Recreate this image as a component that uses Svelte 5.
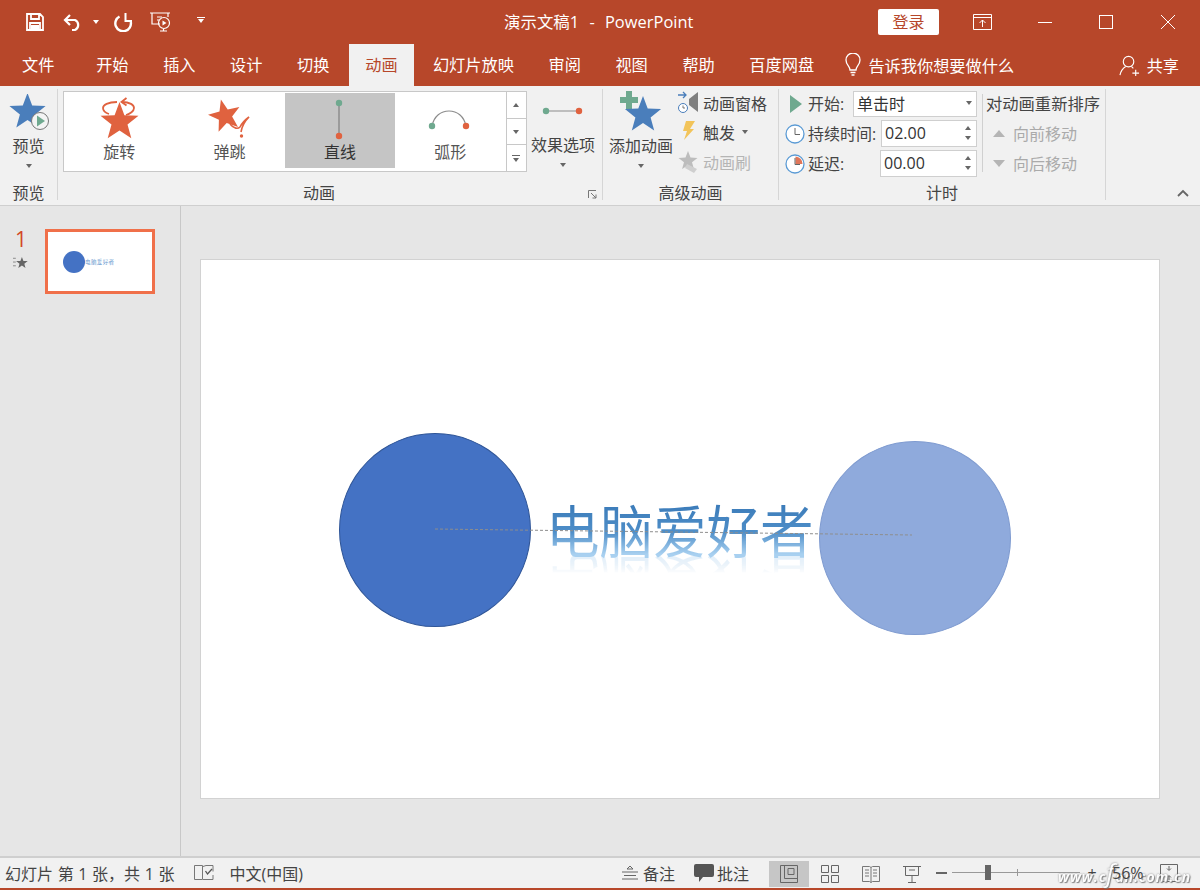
<script>
  function star(cx, cy, R, rot = 0, ratio = 0.42) {
    const pts = [];
    for (let i = 0; i < 10; i++) {
      const rad = i % 2 ? R * ratio : R;
      const a = ((-90 + rot + i * 36) * Math.PI) / 180;
      pts.push(`${(cx + rad * Math.cos(a)).toFixed(1)},${(cy + rad * Math.sin(a)).toFixed(1)}`);
    }
    return pts.join(' ');
  }
  const tabs = ['开始', '插入', '设计', '切换', '动画', '幻灯片放映', '审阅', '视图', '帮助', '百度网盘'];
</script>

<div class="app">
  <header class="titlebar">
    <div class="qat">
      <svg class="i-save" viewBox="0 0 18 18" width="18" height="18"><path d="M1 1h13l3 3v13H1z M5 1v5h8V1 M4 17v-7h10v7" fill="none" stroke="#fff" stroke-width="1.8"/><rect x="5" y="12" width="8" height="5" fill="#fff"/></svg>
      <svg class="i-undo" viewBox="0 0 20 18" width="20" height="18"><path d="M7 2 2 7l5 5M2 7h10a5.500 5.500 0 0 1 0 10H9" fill="none" stroke="#fff" stroke-width="2.200"/></svg>
      <span class="caret-w c1"></span>
      <svg class="i-redo" viewBox="0 0 20 20" width="20" height="20"><path d="M6.500 4.500A7.800 7.800 0 1 0 17.800 10" fill="none" stroke="#fff" stroke-width="2.400"/><path d="M12.500 1V9H19" fill="none" stroke="#fff" stroke-width="2"/></svg>
      <svg class="i-pres" viewBox="0 0 22 22" width="22" height="22"><path d="M1 2h20M3 2v11h8M19 2v4M8 6h5M8 9h2M11 20h7M14.500 18v2" fill="none" stroke="#fff" stroke-width="1.200"/><circle cx="15" cy="12" r="5.500" fill="none" stroke="#fff" stroke-width="1.200"/><path d="M13.500 9.500v5l4-2.500z" fill="#fff"/></svg>
      <span class="custom"><i></i><span class="caret-w"></span></span>
    </div>
    <div class="doc">演示文稿1&nbsp; - &nbsp;PowerPoint</div>
    <div class="wincontrols">
      <button class="login">登录</button>
      <svg class="w-rib" viewBox="0 0 19 16" width="19" height="16"><path d="M.5 3.500h18M.5.500h18v15H.5zM9.500 13V6M6.500 9l3-3 3 3" fill="none" stroke="#fff"/></svg>
      <svg class="w-min" viewBox="0 0 14 14" width="14" height="14"><path d="M0 7.500h14" stroke="#fff"/></svg>
      <svg class="w-max" viewBox="0 0 14 14" width="14" height="14"><rect x=".5" y=".5" width="13" height="13" fill="none" stroke="#fff"/></svg>
      <svg class="w-close" viewBox="0 0 14 14" width="14" height="14"><path d="M0 0l14 14M14 0 0 14" stroke="#fff"/></svg>
    </div>
  </header>

  <nav class="tabbar">
    <span class="tab file">文件</span>
    {#each tabs as t}
      <span class="tab" class:active={t === '动画'}>{t}</span>
    {/each}
    <span class="tell">
      <svg viewBox="0 0 16 24" width="16" height="24"><path d="M5 17c0-4-4-5-4-10a7 7 0 0 1 14 0c0 5-4 6-4 10zM5.500 19.500h5M6.500 22h3" fill="none" stroke="#fff" stroke-width="1.300"/></svg>
      告诉我你想要做什么
    </span>
    <span class="share">
      <svg viewBox="0 0 22 22" width="21" height="21"><circle cx="10" cy="7" r="5.500" fill="none" stroke="#fff" stroke-width="1.200"/><path d="M1 21c1-5 3-7 6-9M13 12l2 2M14 19h7M17.500 15.500v7" fill="none" stroke="#fff" stroke-width="1.200"/></svg>
      共享
    </span>
  </nav>

  <section class="ribbon">
    <div class="group g-preview">
      <div class="body big">
        <svg class="bigicon" viewBox="0 0 40 36" width="40" height="36">
          <polygon points={star(18.500, 18, 19)} fill="#4a7ebb"/>
          <circle cx="31" cy="27" r="8.500" fill="#f4f4f4" stroke="#777" stroke-width="1"/>
          <path d="M28 21.500v11l8-5.500z" fill="#6fa98f"/>
        </svg>
        <span class="biglabel">预览</span>
        <span class="caret"></span>
      </div>
      <div class="glabel">预览</div>
    </div>

    <div class="group g-anim">
      <div class="body anim-body">
        <div class="gallery">
          <div class="gitem">
            <svg viewBox="0 0 44 44" width="44" height="44">
              <polygon points={star(22.500, 26, 20)} fill="#e0623f"/>
              <path d="M20 6C11 6 6 9 6 12c0 3 3 5 6 6M25 6c8 0 12 3 12 6 0 3-4 6-8 7" fill="none" stroke="#e0623f" stroke-width="1.800"/>
              <path d="M29.500 2 24.500 6l5 3.500" fill="none" stroke="#e0623f" stroke-width="1.800"/>
            </svg>
            <span>旋转</span>
          </div>
          <div class="gitem">
            <svg viewBox="0 0 44 44" width="44" height="44">
              <polygon points={star(17, 20, 17, -14)} fill="#e0623f"/>
              <path d="M22 28c4 5 8 5 10 3 2-4 5-7 9-10-4 4-7 9-8 15" fill="none" stroke="#e0623f" stroke-width="1.600"/>
              <circle cx="33.500" cy="40" r="1.700" fill="#e0623f"/>
            </svg>
            <span>弹跳</span>
          </div>
          <div class="gitem sel">
            <svg viewBox="0 0 44 44" width="44" height="44">
              <path d="M21 7v33" stroke="#8c8c8c" stroke-width="1.500"/>
              <circle cx="21" cy="7" r="3.200" fill="#6fa98f"/>
              <circle cx="21" cy="40" r="3.200" fill="#e0623f"/>
            </svg>
            <span>直线</span>
          </div>
          <div class="gitem">
            <svg viewBox="0 0 44 44" width="44" height="44">
              <path d="M4 30C6 20 13 15 21 15s15 5 17 15" fill="none" stroke="#8c8c8c" stroke-width="1.200"/>
              <circle cx="4" cy="30" r="3.200" fill="#6fa98f"/>
              <circle cx="38" cy="30" r="3.200" fill="#e0623f"/>
            </svg>
            <span>弧形</span>
          </div>
          <div class="gscroll">
            <span><b class="up"></b></span>
            <span><b class="down"></b></span>
            <span class="more"><i></i><b class="down"></b></span>
          </div>
        </div>
        <div class="big effect">
          <svg class="effecticon" viewBox="0 0 44 36" width="44" height="36">
            <path d="M5 18h34" stroke="#8c8c8c" stroke-width="1.200"/>
            <circle cx="5" cy="18" r="3.200" fill="#6fa98f"/>
            <circle cx="38" cy="18" r="3.200" fill="#e0623f"/>
          </svg>
          <span class="biglabel">效果选项</span>
          <span class="caret"></span>
        </div>
      </div>
      <div class="glabel anim-label">动画
        <svg class="launcher" viewBox="0 0 9 9" width="9" height="9"><path d="M.5 8V.5H8M3 3l5 5M8 4.500V8H4.500" fill="none" stroke="#777"/></svg>
      </div>
    </div>

    <div class="group g-adv">
      <div class="body adv-body">
        <div class="big add">
          <svg class="addicon" viewBox="0 0 44 40" width="44" height="40">
            <path d="M6 0h6v6h6v6h-6v6H6v-6H0V6h6z" fill="#6fa98f"/>
            <polygon points={star(23, 24, 19)} fill="#4a7ebb"/>
          </svg>
          <span class="biglabel">添加动画</span>
          <span class="caret"></span>
        </div>
        <div class="advlist">
          <div class="row">
            <svg viewBox="0 0 24 26" width="24" height="26">
              <path d="M1 5h8M6 2l3 3-3 3" fill="none" stroke="#4a7ebb" stroke-width="1.300"/>
              <path d="M12 9l9-7v20l-9-7z" fill="#7f7f7f"/>
              <circle cx="6" cy="18" r="4.500" fill="#fff" stroke="#4a7ebb"/>
              <path d="M6 15.500V18h2" fill="none" stroke="#555" stroke-width=".8"/>
            </svg>
            <span>动画窗格</span>
          </div>
          <div class="row">
            <svg viewBox="0 0 24 24" width="24" height="24"><path d="M9 1h9l-5 8h4L7 20l3-9H6z" fill="#f2c45a"/></svg>
            <span>触发</span><span class="caret small"></span>
          </div>
          <div class="row off">
            <svg viewBox="0 0 24 24" width="24" height="24">
              <polygon points={star(11, 11, 10)} fill="#bdbdbd"/>
              <path d="M10 14l10 5-3 4-9-5z" fill="#cfcfcf"/>
            </svg>
            <span>动画刷</span>
          </div>
        </div>
      </div>
      <div class="glabel">高级动画</div>
    </div>

    <div class="group g-time">
      <div class="body time-body">
        <div class="timeform">
          <div class="tr tr-start">
            <svg viewBox="0 0 16 20" width="16" height="20"><path d="M2 1v18l12-9z" fill="#6fa98f"/></svg>
            <label for="start">开始:</label>
            <div id="start" class="field select">单击时<span class="caret small"></span></div>
          </div>
          <div class="tr">
            <svg viewBox="0 0 20 20" width="20" height="20"><circle cx="10" cy="10" r="9" fill="#fff" stroke="#5b9bd5" stroke-width="1.300"/><path d="M10 4v6.500h5" fill="none" stroke="#666"/></svg>
            <label for="dur">持续时间:</label>
            <div id="dur" class="field spin">02.00<span class="arrows"><b class="up"></b><b class="down"></b></span></div>
          </div>
          <div class="tr">
            <svg viewBox="0 0 20 20" width="20" height="20"><circle cx="10" cy="10" r="9" fill="#fff" stroke="#5b9bd5" stroke-width="1.300"/><path d="M10.500 2.500a7.500 7.500 0 0 1 7 7.500h-7z" fill="#e0765a"/><path d="M10 4v6.500h5" fill="none" stroke="#666"/></svg>
            <label for="del">延迟:</label>
            <div id="del" class="field spin wider">00.00<span class="arrows"><b class="up"></b><b class="down"></b></span></div>
          </div>
        </div>
        <div class="reorder">
          <div class="rhead">对动画重新排序</div>
          <div class="rrow"><b class="up large"></b>向前移动</div>
          <div class="rrow"><b class="down large"></b>向后移动</div>
        </div>
      </div>
      <div class="glabel">计时</div>
    </div>

    <div class="collapse">
      <svg viewBox="0 0 12 8" width="12" height="8"><path d="M1 7l5-5 5 5" fill="none" stroke="#666" stroke-width="1.800"/></svg>
    </div>
  </section>

  <main class="workspace">
    <aside class="panel">
      <div class="slidemeta">
        <span class="num">1</span>
        <svg viewBox="0 0 16 13" width="15" height="13">
          <path d="M0 2h3M0 6h3M0 10h3" stroke="#888" stroke-width="1"/>
          <polygon points={star(9.500, 7, 6.500)} fill="#666"/>
        </svg>
      </div>
      <div class="thumb">
        <i class="tcircle"></i><span class="ttext">电脑爱好者</span>
      </div>
    </aside>
    <div class="stage">
      <div class="slide">
        <i class="circle c-a"></i>
        <i class="circle c-b"></i>
        <div class="wordart">电脑爱好者</div>
        <div class="wordart mirror" aria-hidden="true">电脑爱好者</div>
        <svg class="path" viewBox="0 0 960 540" width="960" height="540"><path d="M234 269 711 275" stroke="#8e8e8e" stroke-width="1" stroke-dasharray="3 2" fill="none"/></svg>
      </div>
    </div>
  </main>

  <footer class="status">
    <span class="st-text">幻灯片 第 1 张，共 1 张</span>
    <svg class="st-notes" viewBox="0 0 20 17" width="20" height="17"><path d="M.5 1.500h8v14h-8zM9 2.500l3-1h7v6M9 15.500h10V11" fill="none" stroke="#777"/><path d="M11.500 7l2 3 4.500-5" fill="none" stroke="#555" stroke-width="1.300"/></svg>
    <span class="st-lang">中文(中国)</span>
    <span class="st-right">
      <svg class="s-note" viewBox="0 0 16 14" width="16" height="14"><path d="M8 0 5 3h6zM0 6h16M2 9.500h12M0 13h16" fill="none" stroke="#666"/></svg>
      <span class="s-notes-t">备注</span>
      <svg class="s-com" viewBox="0 0 20 18" width="20" height="18"><path d="M2 0h16a2 2 0 0 1 2 2v9a2 2 0 0 1-2 2H9l-4 5v-5H2a2 2 0 0 1-2-2V2a2 2 0 0 1 2-2z" fill="#555"/></svg>
      <span class="s-com-t">批注</span>
      <span class="viewbtn on"><svg viewBox="0 0 18 18" width="18" height="18"><path d="M.5.500h17v17H.5zM4.500.5v13h13M8 3.500h6v6H8z" fill="none" stroke="#666"/></svg></span>
      <span class="viewbtn"><svg viewBox="0 0 18 18" width="18" height="18"><path d="M.5.500h7v7h-7zM10.500.5h7v7h-7zM.5 10.500h7v7h-7zM10.500 10.500h7v7h-7z" fill="none" stroke="#666"/></svg></span>
      <span class="viewbtn"><svg viewBox="0 0 18 18" width="18" height="18"><path d="M.5 1.500h7l1.500 1 1.500-1h7v15h-7L9 17.500l-1.500-1h-7zM9 2.500v15M3 5h4M3 8h4M3 11h4M11 5h4M11 8h4M11 11h4" fill="none" stroke="#777"/></svg></span>
      <span class="viewbtn"><svg viewBox="0 0 18 18" width="18" height="18"><path d="M0 1.500h18M2.500 1.500v9h13v-9M9 10.500V17M5 17.500h8M6 5h6" fill="none" stroke="#666"/></svg></span>
      <span class="zoom">
        <i class="minus"></i>
        <span class="track"><i class="thumbz"></i><i class="tick"></i></span>
        <span class="plus">+</span>
      </span>
      <span class="pct">56%</span>
      <svg class="fit" viewBox="0 0 18 18" width="18" height="18"><path d="M.5.500h17v17H.5zM9 2v4M7 4.500l2 2 2-2M9 16v-4M7 13.500l2-2 2 2" fill="none" stroke="#666"/></svg>
    </span>
    <span class="watermark">www.c<em>f</em>an.com.cn</span>
  </footer>
  <div class="strip"></div>
</div>

<style>
  :global(body) { margin: 0; }
  .app {
    width: 1200px; height: 890px; display: flex; flex-direction: column; overflow: hidden;
    font-family: "Open Sans", "Noto Sans CJK SC", sans-serif; font-size: 16px; color: #444; background: #e6e6e6;
  }
  svg { display: block; flex: none; }
  b, i { display: block; }

  .titlebar { height: 44px; flex: none; background: #b7472a; color: #fff; display: flex; align-items: center; }
  .qat { width: 504px; flex: none; display: flex; align-items: center; height: 100%; }
  .i-save { margin-left: 26px; }
  .i-undo { margin-left: 19px; }
  .c1 { margin-left: 10px; }
  .i-redo { margin-left: 14px; }
  .i-pres { margin-left: 16px; }
  .custom { margin-left: 26px; display: flex; flex-direction: column; gap: 1px; align-items: center; margin-top: -4px; }
  .custom i { width: 8px; height: 1px; background: #fff; }
  .caret-w { display: block; width: 0; height: 0; border: 3.500px solid transparent; border-top: 4px solid #fff; border-bottom: 0; }
  .doc { width: 188px; flex: none; white-space: nowrap; font-size: 16.400px; padding-bottom: 3px; word-spacing: .8px; letter-spacing: .05px; }
  .wincontrols { flex: 1; display: flex; align-items: center; }
  .login { margin-left: 186px; width: 61px; height: 26px; border: 0; border-radius: 2px; background: #fff; color: #b7472a; font: inherit; padding: 0 0 2px; }
  .w-rib { margin-left: 34px; }
  .w-min { margin-left: 46px; }
  .w-max { margin-left: 47px; }
  .w-close { margin-left: 48px; }

  .tabbar { height: 42px; flex: none; background: #b7472a; color: #fff; display: flex; align-items: stretch; font-size: 16.200px; }
  .tab { padding: 0 17.300px; line-height: 42px; white-space: nowrap; }
  .tab.file { padding: 0 24.500px 0 22px; }
  .tab.active { background: #f1f1f1; color: #b7472a; padding: 0 16.500px; margin: 0 1.500px 0 2px; }
  .tell { margin-left: 14px; display: flex; align-items: center; gap: 7px; white-space: nowrap; }
  .share { margin-left: auto; margin-right: 21px; display: flex; align-items: center; gap: 7px; }

  .ribbon { height: 120px; flex: none; box-sizing: border-box; background: #f1f1f1; border-bottom: 1px solid #cfcfcf; display: flex; }
  .group { display: flex; flex-direction: column; box-sizing: border-box; border-right: 1px solid #d6d6d6; margin-top: 3px; margin-bottom: 5px; flex: none; }
  .body { flex: 1; min-height: 0; }
  .glabel { height: 26px; line-height: 26px; text-align: center; position: relative; white-space: nowrap; margin-bottom: -6px; }
  .anim-label { padding-right: 22px; }
  .launcher { position: absolute; right: 5px; top: 10px; }
  .big { display: flex; flex-direction: column; align-items: center; }
  .biglabel { line-height: 22px; white-space: nowrap; }
  .caret { display: block; width: 0; height: 0; border: 3.500px solid transparent; border-top: 4px solid #666; border-bottom: 0; margin-top: 7px; }
  .caret.small { margin-top: 0; }
  .g-preview { width: 58px; }
  .g-preview .bigicon { margin: 5px 0 5px 1px; }
  .g-anim { width: 545px; }
  .anim-body { display: flex; padding: 2px 0 0 5px; }
  .gallery { width: 464px; height: 81px; box-sizing: border-box; background: #fff; border: 1px solid #c8c8c8; display: flex; padding: 1px 0 3px 0; }
  .gitem { width: 110.400px; flex: none; display: flex; flex-direction: column; align-items: center; color: #555; }
  .gitem span { line-height: 22px; margin-top: 4px; }
  .gitem svg { margin-top: 3px; margin-bottom: -3px; }
  .gitem.sel { background: #c5c5c5; color: #333; }
  .gscroll { margin-left: auto; margin-top: -1px; margin-bottom: -3px; width: 20px; display: flex; flex-direction: column; border-left: 1px solid #c8c8c8; }
  .gscroll span { flex: 1; display: flex; flex-direction: column; align-items: center; justify-content: center; gap: 2px; border-bottom: 1px solid #c8c8c8; }
  .gscroll span:last-child { border-bottom: 0; }
  .gscroll i { width: 8px; height: 1px; background: #666; }
  .up { width: 0; height: 0; border: 3.500px solid transparent; border-bottom: 4px solid #666; border-top: 0; }
  .down { width: 0; height: 0; border: 3.500px solid transparent; border-top: 4px solid #666; border-bottom: 0; }
  .effect { width: 72px; }
  .effecticon { margin: 2px 0 5px; }
  .g-adv { width: 176px; }
  .adv-body { display: flex; }
  .add { width: 76px; }
  .addicon { margin: 2px 0 4px 2px; }
  .advlist { display: flex; flex-direction: column; margin: -1px 0 0 -2px; }
  .row { height: 29.500px; display: flex; align-items: center; gap: 1px; white-space: nowrap; }
  .row svg { margin-right: 1px; }
  .row .caret { margin-left: 6px; }
  .off { color: #b5b5b5; }
  .g-time { width: 327px; }
  .time-body { display: flex; padding: 2px 0 0 6px; }
  .timeform { width: 192px; display: flex; flex-direction: column; gap: 3px; }
  .tr { height: 27px; display: flex; align-items: center; white-space: nowrap; }
  .tr-start { height: 26px; }
  .tr-start svg { margin-left: 3px; }
  .tr label { margin-left: 3px; padding-bottom: 2px; }
  .tr-start label { margin-left: 4px; }
  .field { box-sizing: border-box; height: 100%; background: #fff; border: 1px solid #cfcfcf; display: flex; align-items: center; padding: 0 0 2px 3px; margin-left: auto; color: #333; }
  .select { width: 124px; }
  .select .caret { margin-left: auto; margin-right: 4px; }
  .spin { width: 96px; }
  .wider { width: 97px; }
  .arrows { margin-left: auto; margin-right: 5px; display: flex; flex-direction: column; gap: 6px; }
  .reorder { margin-left: 5px; border-left: 1px solid #d0d0d0; height: 78px; margin-top: 3px; padding-left: 3px; white-space: nowrap; }
  .rhead { line-height: 18px; margin-top: 1px; font-size: 16.300px; }
  .rrow { height: 30px; display: flex; align-items: center; gap: 8px; padding-left: 7px; color: #aaa; }
  .rrow:nth-child(2) { margin-top: 5px; }
  .up.large { border-width: 6px; border-bottom: 7px solid #b5b5b5; border-top: 0; }
  .down.large { border-width: 6px; border-top: 7px solid #b5b5b5; border-bottom: 0; }
  .collapse { margin-left: auto; margin-right: 11px; align-self: flex-end; margin-bottom: 8px; }

  .workspace { flex: 1; min-height: 0; display: flex; background: #e6e6e6; }
  .panel { width: 181px; box-sizing: border-box; flex: none; border-right: 1px solid #c8c8c8; display: flex; padding: 23px 0 0 13px; }
  .slidemeta { width: 32px; display: flex; flex-direction: column; }
  .num { color: #d24726; font-size: 21px; line-height: 20px; margin-left: 2px; font-weight: 500; }
  .slidemeta svg { margin-top: 7px; }
  .thumb { width: 110px; height: 65px; box-sizing: border-box; background: #fff; border: 3px solid #f0704a; display: flex; align-items: center; padding: 0 0 0 15px; }
  .tcircle { width: 22px; height: 22px; border-radius: 50%; background: #4472c4; flex: none; }
  .ttext { font-size: 5.500px; color: #6a9bd0; white-space: nowrap; letter-spacing: .4px; }
  .stage { flex: 1; padding: 53px 0 0 19px; }
  .slide { width: 960px; height: 540px; box-sizing: border-box; background: #fff; border: 1px solid #d2d2d2; position: relative; }
  .circle { position: absolute; width: 192px; height: 194px; border-radius: 50%; box-sizing: border-box; }
  .c-a { left: 138px; top: 173px; background: #4472c4; border: 1px solid #2f5597; }
  .c-b { left: 618px; top: 181px; background: #8faadc; border: 1px solid #7f9bd0; }
  .wordart { position: absolute; left: 345px; top: 233px; font-family: "Noto Sans CJK SC", sans-serif; font-weight: 400; font-size: 53.500px; line-height: 70px; white-space: nowrap; transform: scaleY(1.07);
    background: linear-gradient(#3a7ab8 15%, #4e8ec8 55%, #a8d0f0 85%); -webkit-background-clip: text; background-clip: text; color: transparent; }
  .mirror { top: 289px; transform: scaleY(-1.07); opacity: .35; -webkit-mask-image: linear-gradient(to top, #000 12%, transparent 36%); mask-image: linear-gradient(to top, #000 12%, transparent 36%); }
  .path { position: absolute; left: 0; top: 0; }

  .status { height: 32px; flex: none; box-sizing: border-box; background: #f1f1f1; border-top: 2px solid #cfcfcf; padding-bottom: 1px; display: flex; align-items: center; position: relative; white-space: nowrap; }
  .st-text { margin-left: 5px; word-spacing: .5px; }
  .st-notes { margin-left: 19px; }
  .st-lang { margin-left: 16px; }
  .st-right { margin-left: auto; display: flex; align-items: center; height: 100%; }
  .s-note { margin-right: 5px; }
  .s-com { margin-left: 19px; margin-right: 3px; }
  .s-com-t { margin-right: 20px; }
  .viewbtn { width: 41px; height: 26px; display: flex; align-items: center; justify-content: center; margin-top: 2px; }
  .viewbtn.on { background: #c6c6c6; width: 40px; }
  .zoom { display: flex; align-items: center; margin-left: 4px; }
  .minus { width: 11px; height: 2px; background: #666; }
  .track { width: 128px; height: 1px; background: #999; margin-left: 5px; position: relative; }
  .thumbz { position: absolute; left: 33px; top: -7px; width: 6px; height: 15px; background: #666; }
  .tick { position: absolute; left: 65px; top: -3px; width: 1px; height: 7px; background: #999; }
  .plus { margin-left: 5px; width: 14px; text-align: center; }
  .pct { margin-left: 13px; width: 32px; position: relative; z-index: 2; }
  .fit { margin-left: 16px; margin-right: 22px; }
  .watermark { position: absolute; left: 1058px; top: 7px; font-size: 14px; font-style: italic; font-weight: 700; color: #fff; letter-spacing: .9px; text-shadow: 0 0 2px #666, 1px 1px 1px #777; opacity: .85; }
  .watermark em { font-size: 26px; line-height: 14px; font-weight: 400; }
  .strip { height: 2px; flex: none; background: #b7472a; }
</style>
